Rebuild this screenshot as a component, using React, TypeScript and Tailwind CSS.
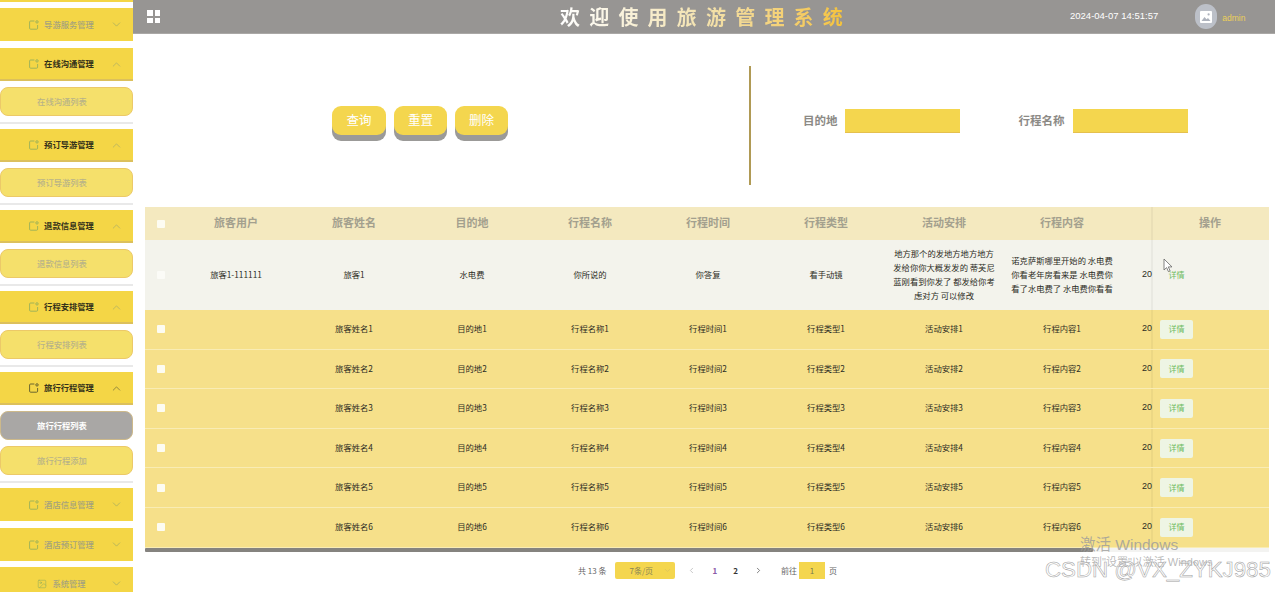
import { ChevronDown, ChevronUp, ChevronLeft, ChevronRight, Image as ImageIcon } from "lucide-react";

const font = { fontFamily: '"Noto Sans CJK SC","Liberation Sans",sans-serif' };
const latin = { fontFamily: '"Liberation Sans","Noto Sans CJK SC",sans-serif' };

function NoteIcon({ dark }: { dark?: boolean }) {
  const c = dark ? "#5b5a2c" : "#97b05a";
  return (
    <svg width="10" height="10" viewBox="0 0 10 10" fill="none" stroke={c} strokeWidth="0.9" className="shrink-0">
      <path d="M5.4 1H1.6a1 1 0 0 0-1 1v6.2a1 1 0 0 0 1 1h6a1 1 0 0 0 1-1V5" />
      <circle cx="8" cy="1.9" r="1.2" />
    </svg>
  );
}

function MenuHead({ label, open, dark, pic }: { label: string; open?: boolean; dark?: boolean; pic?: boolean }) {
  return (
    <div className={`relative flex h-[33px] shrink-0 items-center justify-center bg-[#f4d646] ${open ? "border-b-2 border-[#dcc05c]" : ""}`}>
      <div className="flex items-center gap-[5px] pr-[10px]">
        {pic ? <ImageIcon size={10} color="#97b05a" strokeWidth={1.4} /> : <NoteIcon dark={dark} />}
        <span className={`text-[8.3px] ${open ? "font-bold text-[#34321a]" : "font-medium text-[#a5a27e]"}`}>{label}</span>
      </div>
      <span className="absolute right-[10px] top-[10px]">
        {open ? <ChevronUp size={13} color={dark ? "#6c6a3a" : "#a8ab6a"} strokeWidth={1.3} /> : <ChevronDown size={13} color="#a0aa62" strokeWidth={1.3} />}
      </span>
    </div>
  );
}

function SubItem({ label, active, className = "" }: { label: string; active?: boolean; className?: string }) {
  return (
    <div className={`flex h-[29px] shrink-0 items-center justify-center rounded-[8px] border pr-[9px] text-[8.3px] ${active ? "border-[#cdb98a] bg-[#a9a7a5] font-bold text-white" : "border-[#ecc968] bg-[#f5e06b] font-medium text-[#b8b388]"} ${className}`}>
      {label}
    </div>
  );
}

function Divider() {
  return <div className="mt-[6px] h-[2px] shrink-0 bg-[#e9e9e9]" />;
}

function Group({ head, sub, first }: { head: string; sub: string; first?: boolean }) {
  return (
    <div className={`${first ? "mt-[7px]" : "mt-[5px]"} flex shrink-0 flex-col`}>
      <MenuHead label={head} open />
      <SubItem label={sub} className="mt-[6px]" />
      <Divider />
    </div>
  );
}

function Sidebar() {
  return (
    <aside className="flex h-[592px] w-[133px] shrink-0 flex-col overflow-hidden bg-white">
      <div className="h-[2px] shrink-0 bg-[#f4d646]" />
      <div className="mt-[6px]"><MenuHead label="导游服务管理" /></div>
      <Group head="在线沟通管理" sub="在线沟通列表" first />
      <Group head="预订导游管理" sub="预订导游列表" />
      <Group head="退款信息管理" sub="退款信息列表" />
      <Group head="行程安排管理" sub="行程安排列表" />
      <div className="mt-[5px] flex shrink-0 flex-col">
        <MenuHead label="旅行行程管理" open dark />
        <SubItem label="旅行行程列表" active className="mt-[6px]" />
        <SubItem label="旅行行程添加" className="mt-[6px]" />
        <Divider />
      </div>
      <div className="mt-[5px]"><MenuHead label="酒店信息管理" /></div>
      <div className="mt-[7px]"><MenuHead label="酒店预订管理" /></div>
      <div className="mt-[6px]"><MenuHead label="系统管理" pic /></div>
    </aside>
  );
}

function Header() {
  return (
    <header className="flex h-[34px] shrink-0 items-center border-b border-[#aaa8a6] bg-[#979593]">
      <div className="ml-[14px] grid h-[13px] w-[13px] grid-cols-2 gap-[2px]">
        <i className="bg-white" /><i className="bg-white" /><i className="bg-white" /><i className="bg-white" />
      </div>
      <h1 className="ml-[400px] w-[286px] whitespace-nowrap bg-gradient-to-r from-white via-[#f3e2ae] to-[#f5c235] bg-clip-text text-[20px] font-bold tracking-[9.2px] text-transparent">
        欢迎使用旅游管理系统
      </h1>
      <span className="ml-[224px] text-[9.5px] text-white" style={latin}>2024-04-07 14:51:57</span>
      <div className="ml-[37px] flex h-[25px] w-[22px] items-center justify-center rounded-full bg-[#bcc0c8]">
        <svg width="12" height="12" viewBox="0 0 12 12">
          <rect width="12" height="12" rx="1" fill="#fff" />
          <path d="M1.5 10 4.5 6l2 2.3L8 7l2.5 3z" fill="#aeb3bd" />
          <circle cx="8.6" cy="3.4" r="1.1" fill="#aeb3bd" />
        </svg>
      </div>
      <span className="ml-[5px] mt-[3px] text-[8.5px] text-[#eccf5a]" style={latin}>admin</span>
    </header>
  );
}

function SearchBar() {
  const btn = "flex h-[29px] items-center justify-center rounded-[9px] bg-[#f4d64e] text-[12.5px] text-white shadow-[0_6px_0_#9b9a98]";
  const label = "text-[11.5px] font-bold text-[#8c8a86]";
  const input = "h-[24px] w-[115px] border-b border-[#e5c04e] bg-[#f4d64e]";
  return (
    <section className="flex h-[173px] shrink-0 items-center">
      <div className="ml-[199px] flex gap-[8px]">
        <div className={`${btn} w-[54px]`}>查询</div>
        <div className={`${btn} w-[53px]`}>重置</div>
        <div className={`${btn} w-[53px]`}>删除</div>
      </div>
      <div className="ml-[241px] mt-[10px] h-[119px] w-[2px] bg-[#b09a55]" />
      <div className="ml-[52px] mt-[1px] flex items-center">
        <span className={label}>目的地</span>
        <div className={`${input} ml-[7px]`} />
        <span className={`${label} ml-[59px]`}>行程名称</span>
        <div className={`${input} ml-[8px]`} />
      </div>
    </section>
  );
}

const cols = ["旅客用户", "旅客姓名", "目的地", "行程名称", "行程时间", "行程类型", "活动安排", "行程内容"];
const grid = "grid grid-cols-[32px_repeat(8,118px)_30px_118px]";

function Check({ dim }: { dim?: boolean }) {
  return <div className={`h-[8px] w-[8px] rounded-[1px] ${dim ? "bg-[#fbfbf7]" : "bg-[#fdfcf2]"}`} />;
}

function Fixed({ children, className = "" }: { children: React.ReactNode; className?: string }) {
  return <div className={`flex items-center border-l-2 border-black/[0.04] ${className}`}>{children}</div>;
}

function Cell({ children, multi }: { children: React.ReactNode; multi?: boolean }) {
  return (
    <div className={`flex items-center justify-center pb-[2px] text-center text-[8.3px] text-[#2c2c24] ${multi ? "whitespace-pre-line leading-[14px]" : ""}`}>
      {children}
    </div>
  );
}

function Twenty() {
  return (
    <div className="flex items-center pb-[1px] text-[9px] text-[#2c2c24]" style={latin}>
      <span className="ml-[21px]">20</span>
    </div>
  );
}

function Table() {
  const rows = [1, 2, 3, 4, 5, 6];
  return (
    <section className="ml-[12px] flex w-[1124px] flex-col">
      <div className={`${grid} h-[33px] bg-[#f4e9bf]`}>
        <div className="flex items-center justify-center"><Check /></div>
        {cols.map((c) => (
          <div key={c} className="flex items-center justify-center pb-[2px] text-[11px] font-semibold text-[#a3a08e]">{c}</div>
        ))}
        <div />
        <Fixed className="justify-center pb-[2px] pr-[2px] text-[11px] font-semibold text-[#a3a08e]">操作</Fixed>
      </div>
      <div className={`${grid} h-[70px] bg-[#f3f3ec]`}>
        <div className="flex items-center justify-center"><Check dim /></div>
        <Cell>旅客1-111111</Cell>
        <Cell>旅客1</Cell>
        <Cell>水电费</Cell>
        <Cell>你所说的</Cell>
        <Cell>你答复</Cell>
        <Cell>看手动镜</Cell>
        <Cell multi>{"地方那个的发地方地方地方\n发给你你大概发发的 蒂芙尼\n蓝刚看到你发了 都发给你考\n虑对方 可以修改"}</Cell>
        <Cell multi>{"诺克萨斯哪里开始的 水电费\n你看老年房看来是 水电费你\n看了水电费了 水电费你看看"}</Cell>
        <Twenty />
        <Fixed>
          <div className="ml-[7px] flex h-[19px] w-[33px] items-center justify-center text-[8px] text-[#6dbb5e]">详情</div>
        </Fixed>
      </div>
      {rows.map((n) => (
        <div key={n} className={`${grid} h-[39.6px] border-b border-[#f9ecb4] bg-[#f6e08a]`}>
          <div className="flex items-center justify-center"><Check /></div>
          <Cell>{""}</Cell>
          <Cell>旅客姓名{n}</Cell>
          <Cell>目的地{n}</Cell>
          <Cell>行程名称{n}</Cell>
          <Cell>行程时间{n}</Cell>
          <Cell>行程类型{n}</Cell>
          <Cell>活动安排{n}</Cell>
          <Cell>行程内容{n}</Cell>
          <Twenty />
          <Fixed>
            <div className="ml-[7px] flex h-[19px] w-[33px] items-center justify-center rounded-[2px] bg-[#eef5e4] text-[8px] text-[#6dbb5e]">详情</div>
          </Fixed>
        </div>
      ))}
      <div className="h-[4px] bg-[#f3f3f1]">
        <div className="h-[4px] w-[948px] rounded-[1px] bg-[#85837f]" />
      </div>
    </section>
  );
}

function Pagination() {
  return (
    <nav className="ml-[445px] mt-[10px] flex h-[18px] items-center text-[8px] text-[#666]">
      <span>共 13 条</span>
      <div className="ml-[9px] flex h-[17px] w-[60px] items-center rounded-[2px] bg-[#f4d64e] text-[#8b8656]">
        <span className="ml-[14px]">7条/页</span>
        <ChevronDown size={9} color="#d9c25e" className="ml-[10px]" />
      </div>
      <ChevronLeft size={9} color="#b5b5b5" className="ml-[12px]" />
      <span className="ml-[16px] font-bold text-[#8a5aa8]">1</span>
      <span className="ml-[16px] font-bold text-[#333]">2</span>
      <ChevronRight size={9} color="#555" className="ml-[16px]" />
      <span className="ml-[18px]">前往</span>
      <div className="ml-[2px] flex h-[17px] w-[26px] items-center justify-center bg-[#f4d64e] text-[#7a7650]">1</div>
      <span className="ml-[4px]">页</span>
    </nav>
  );
}

export default function App() {
  return (
    <div className="relative flex h-[592px] w-[1275px] overflow-hidden bg-white" style={font}>
      <Sidebar />
      <main className="flex min-w-0 flex-1 flex-col">
        <Header />
        <SearchBar />
        <Table />
        <Pagination />
      </main>
      <svg width="11" height="15" viewBox="0 0 11 15" className="absolute left-[1163px] top-[258px]">
        <path d="M1 1v11l2.6-2.4 1.8 4 1.7-.8-1.8-3.9H9z" fill="#fff" stroke="#666" strokeWidth="0.8" />
      </svg>
      <div className="absolute left-[1080px] top-[536px] whitespace-nowrap text-[15.5px] leading-[18px] text-[#9b9b9b]/80" style={latin}>激活 Windows</div>
      <div className="absolute left-[1080px] top-[556px] whitespace-nowrap text-[11px] leading-[13px] text-[#9b9b9b]/70" style={latin}>转到"设置"以激活 Windows</div>
      <div className="absolute left-[1045px] top-[556px] whitespace-nowrap text-[22.3px] leading-[28px] text-white/50 [-webkit-text-stroke:0.5px_#9c9c9c]" style={latin}>CSDN @VX_ZYKJ985</div>
    </div>
  );
}
